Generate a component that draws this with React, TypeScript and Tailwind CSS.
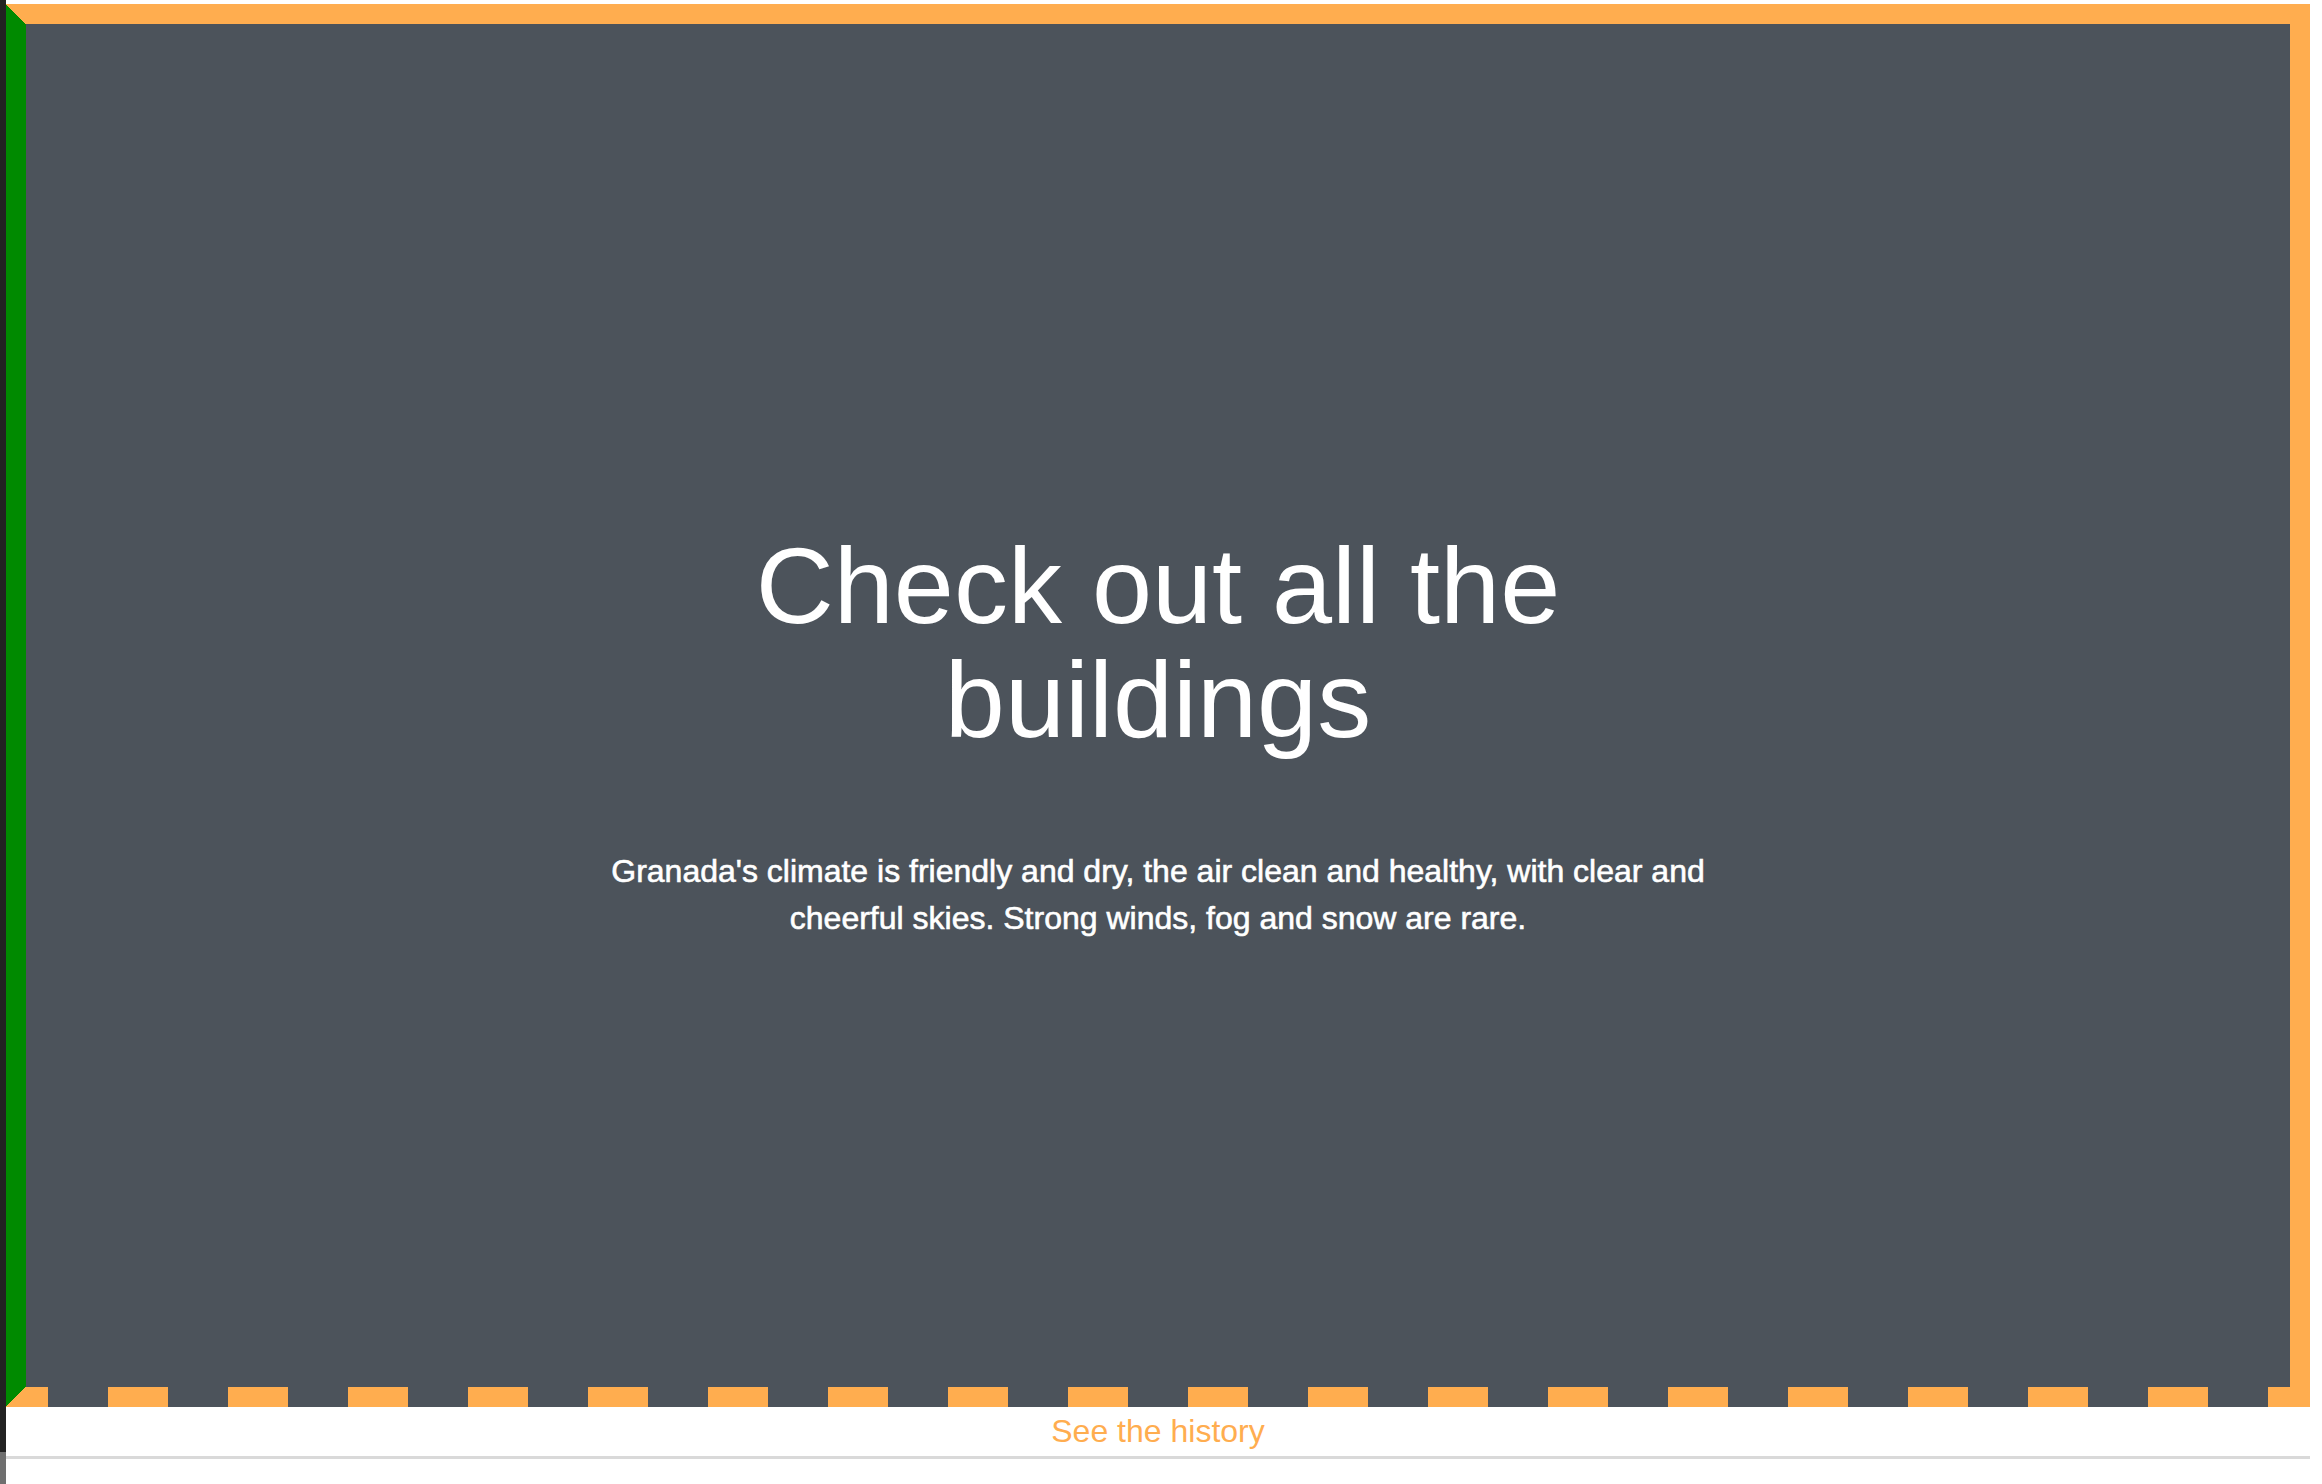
export default function App() {
  return (
    <div className="flex h-[1484px] w-full bg-white font-['Liberation_Sans',Arial,sans-serif]">
      {/* window edge */}
      <div className="flex w-[6px] flex-col">
        <div className="h-[1452px] bg-[#222222]"></div>
        <div className="flex-1 bg-[#6f6f6f]"></div>
      </div>

      <div className="flex w-[2304px] flex-col pt-[4px]">
        {/* Hero frame: green left edge, orange top/right, dashed orange bottom */}
        <section className="flex h-[1403px] flex-col bg-[#4c535b] text-white">
          <div className="flex h-[20px]">
            <div className="w-[20px] bg-[image:linear-gradient(to_top_right,#008a00_50%,#ffad4f_50%)]"></div>
            <div className="flex-1 bg-[#ffad4f]"></div>
          </div>

          <div className="flex flex-1">
            <div className="w-[20px] bg-[#008a00]"></div>
            <div className="flex flex-1 flex-col items-center justify-center pt-[59px]">
              <h1 className="w-[1000px] text-center text-[108px] leading-[114px]">
                Check out all the buildings
              </h1>
              <p className="mt-[91px] w-[1160px] text-center text-[32px] leading-[47px] [-webkit-text-stroke:0.6px_white]">
                Granada's climate is friendly and dry, the air clean and healthy, with clear and
                cheerful skies. Strong winds, fog and snow are rare.
              </p>
            </div>
            <div className="w-[20px] bg-[#ffad4f]"></div>
          </div>

          <div className="flex h-[20px]">
            <div className="w-[20px] bg-[image:linear-gradient(to_bottom_right,#008a00_50%,#ffad4f_50%)]"></div>
            <div className="flex-1 bg-[image:repeating-linear-gradient(90deg,#ffad4f_0_22px,#4c535b_22px_82px,#ffad4f_82px_120px)]"></div>
          </div>
        </section>

        {/* Footer link */}
        <a href="#" className="block h-[49px] text-center text-[32px] leading-[49px] text-[#ffad4f]">
          See the history
        </a>
        <div className="h-[3px] bg-[#d9d9d9]"></div>
      </div>
    </div>
  )
}
